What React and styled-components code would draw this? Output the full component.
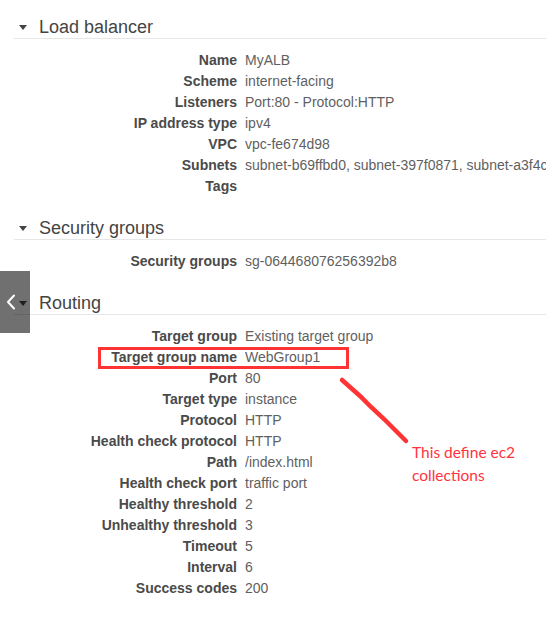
import React from "react";
import styled, { createGlobalStyle } from "styled-components";

const GlobalStyle = createGlobalStyle`
  html, body {
    margin: 0;
    padding: 0;
    background: #fff;
  }
  body {
    font-family: "Liberation Sans", Arial, sans-serif;
  }
`;

const Page = styled.div`
  position: relative;
  width: 546px;
  height: 622px;
  overflow: hidden;
  background: #fff;
  padding-top: 16px;
  box-sizing: border-box;
`;

const Section = styled.section`
  margin-bottom: 20px;
`;

const Heading = styled.div`
  display: flex;
  align-items: center;
  margin-left: 14px;
  height: 22px;
  border-bottom: 1px solid #e6e6e6;
  font-size: 18px;
  line-height: 22px;
  color: #444;
`;

const Caret = styled.span`
  width: 0;
  height: 0;
  margin: 0 12px 0 5px;
  border-left: 4px solid transparent;
  border-right: 4px solid transparent;
  border-top: 5px solid #444;
`;

const Rows = styled.div`
  display: grid;
  grid-template-columns: 237px 1fr;
  column-gap: 8px;
  margin-top: 11px;
`;

const Label = styled.div`
  text-align: right;
  font-size: 14px;
  font-weight: bold;
  line-height: 21px;
  color: #4a4a4a;
  white-space: nowrap;
`;

const Value = styled.div`
  font-size: 14px;
  line-height: 21px;
  color: #5f5f5f;
  white-space: nowrap;
  overflow: hidden;
`;

const NavTab = styled.div`
  position: absolute;
  left: 0;
  top: 271px;
  width: 30px;
  height: 62px;
  background: rgba(0, 0, 0, 0.56);
  display: flex;
  align-items: center;
  justify-content: center;
  padding-right: 8px;
  box-sizing: border-box;
`;

const Highlight = styled.div`
  position: absolute;
  left: 98px;
  top: 347px;
  width: 251px;
  height: 22px;
  border: 3px solid #ff3333;
  box-sizing: border-box;
`;

const Arrow = styled.svg`
  position: absolute;
  left: 336px;
  top: 374px;
`;

const Note = styled.div`
  position: absolute;
  left: 412px;
  top: 441px;
  font-family: Lato, "Open Sans", sans-serif;
  font-size: 15.5px;
  line-height: 23px;
  color: #ff3340;
`;

const sections = [
  {
    title: "Load balancer",
    rows: [
      ["Name", "MyALB"],
      ["Scheme", "internet-facing"],
      ["Listeners", "Port:80 - Protocol:HTTP"],
      ["IP address type", "ipv4"],
      ["VPC", "vpc-fe674d98"],
      ["Subnets", "subnet-b69ffbd0, subnet-397f0871, subnet-a3f4c8e9"],
      ["Tags", ""],
    ],
  },
  {
    title: "Security groups",
    rows: [["Security groups", "sg-064468076256392b8"]],
  },
  {
    title: "Routing",
    rows: [
      ["Target group", "Existing target group"],
      ["Target group name", "WebGroup1"],
      ["Port", "80"],
      ["Target type", "instance"],
      ["Protocol", "HTTP"],
      ["Health check protocol", "HTTP"],
      ["Path", "/index.html"],
      ["Health check port", "traffic port"],
      ["Healthy threshold", "2"],
      ["Unhealthy threshold", "3"],
      ["Timeout", "5"],
      ["Interval", "6"],
      ["Success codes", "200"],
    ],
  },
];

export default function App() {
  return (
    <Page>
      <GlobalStyle />
      {sections.map((s) => (
        <Section key={s.title}>
          <Heading>
            <Caret />
            {s.title}
          </Heading>
          <Rows>
            {s.rows.map(([label, value]) => (
              <React.Fragment key={label}>
                <Label>{label}</Label>
                <Value>{value}</Value>
              </React.Fragment>
            ))}
          </Rows>
        </Section>
      ))}

      <NavTab>
        <svg width="10" height="16" viewBox="0 0 10 16">
          <path d="M8 1.5 L2 8 L8 14.5" fill="none" stroke="#fff" strokeWidth="2" strokeLinecap="round" strokeLinejoin="round" />
        </svg>
      </NavTab>

      <Highlight />
      <Arrow width="80" height="74" viewBox="0 0 80 74">
        <path d="M6 6 L24 22 L35 33 L48 45 L70 67" fill="none" stroke="#ff3333" strokeWidth="4.5" strokeLinecap="round" />
      </Arrow>
      <Note>
        This define ec2
        <br />
        collections
      </Note>
    </Page>
  );
}
